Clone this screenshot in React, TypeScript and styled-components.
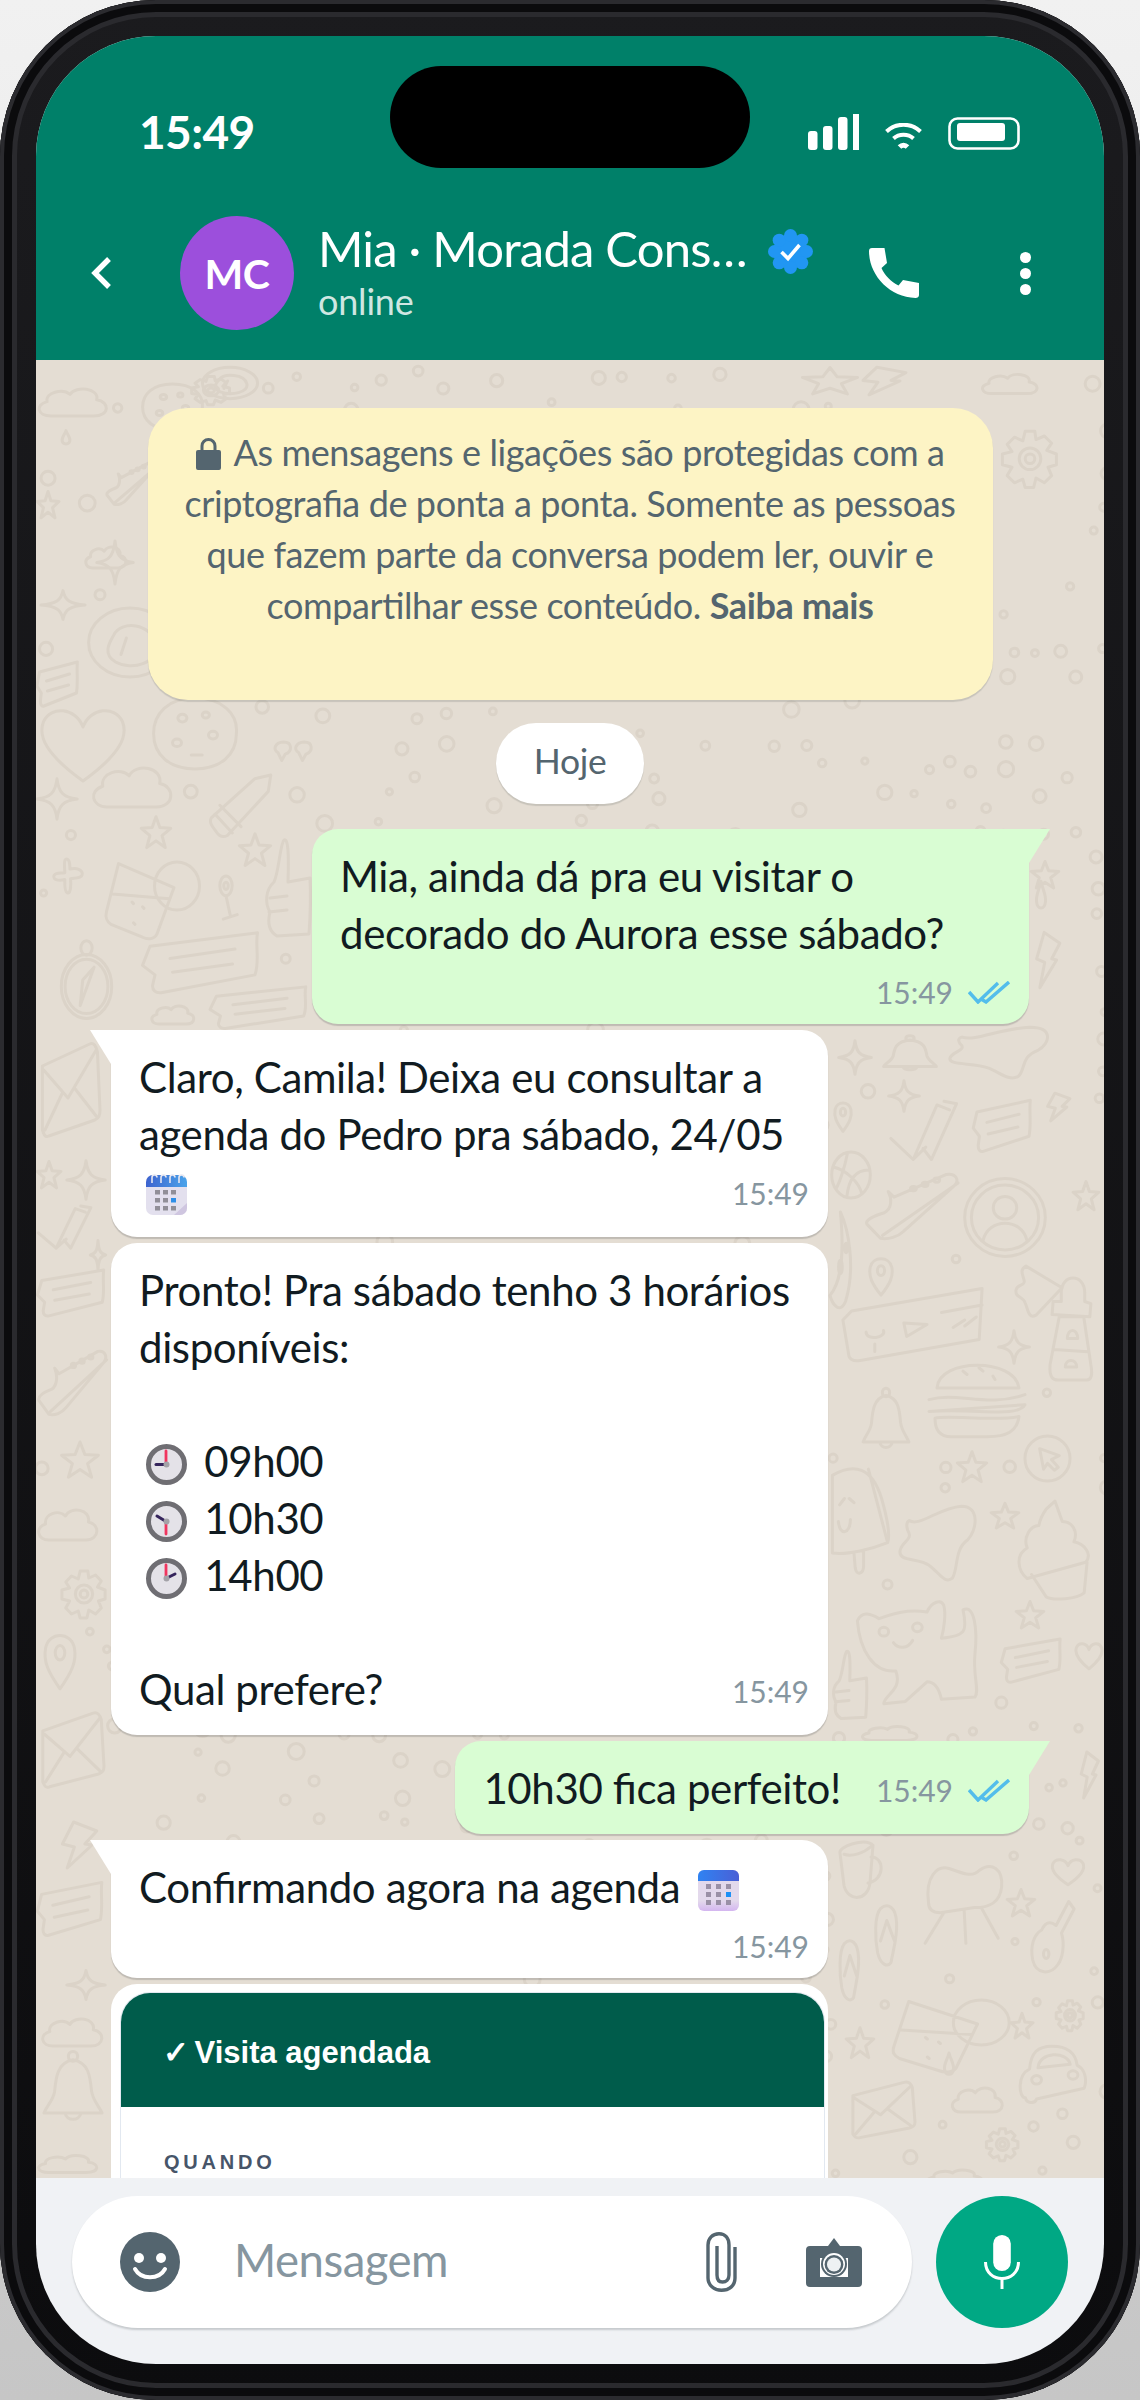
import React from 'react';
import styled, { createGlobalStyle } from 'styled-components';

const c = (x: number, y: number, r: number) =>
  `M${x - r} ${y}a${r} ${r} 0 1 0 ${r * 2} 0a${r} ${r} 0 1 0 ${-r * 2} 0Z`;

// doodles of the wallpaper, each one in a 100x100 box
const SHAPES: Record<string, string> = {
  star: 'M50 5L62 36L96 38L69 59L79 93L50 74L21 93L31 59L4 38L38 36Z',
  spark: 'M50 2C54 35 65 46 98 50C65 54 54 65 50 98C46 65 35 54 2 50C35 46 46 35 50 2Z',
  plus: 'M42 4C50 0 56 6 56 30C78 26 98 32 94 46C90 56 70 54 58 56C60 76 58 98 48 94C38 90 40 70 40 58C22 62 2 60 6 48C10 38 28 42 40 40C40 26 36 10 42 4Z',
  cloud: 'M20 80C2 80-2 55 15 48C12 28 36 18 46 32C54 12 86 18 82 44C100 48 100 80 78 80Z',
  heart: 'M50 90C10 60 2 40 8 24C16 6 42 8 50 30C58 8 84 6 92 24C98 40 90 60 50 90Z',
  chat: 'M8 24L94 4C92 24 96 44 92 66L18 92C12 94 10 88 10 82L12 66L2 52ZM24 42L76 28M26 62L74 50',
  pin: 'M50 98C20 70 8 52 14 30C22 2 78 2 86 30C92 52 80 70 50 98Z' + c(50, 38, 12),
  bell: `M50 14C26 18 24 40 22 60C20 72 10 80 6 90L94 90C88 78 80 72 78 58C76 38 74 18 50 14Z${c(50, 9, 7)}M38 90C40 102 60 102 62 90`,
  checks: 'M4 62L36 96L70 8L88 16M36 96L54 76M50 78L62 96L98 6L80 2',
  ball: `${c(50, 50, 46)}M8 34C40 40 70 66 76 88M42 5C34 40 20 70 14 78M92 40C60 40 44 60 40 94`,
  sneaker: 'M26 26L32 34L86 2C96 0 100 10 94 18L42 82C36 90 26 94 18 92L4 72C2 66 12 60 22 56C30 50 30 36 26 26ZM20 88L98 14M48 26' + c(52, 22, 3) + c(64, 16, 3) + c(76, 10, 3),
  profile: `${c(50, 50, 48)}${c(50, 50, 40)}${c(50, 38, 14)}M24 78C30 50 70 50 76 78`,
  bolt: 'M34 4L92 22L62 48L80 50L18 96L36 54L6 48Z',
  moon: 'M40 2C70 20 100 60 60 96C40 110 10 100 0 90C30 80 60 60 40 2Z' + c(40, 60, 7) + c(62, 40, 5),
  voice: `M8 32L98 2L96 70L14 98C8 100 6 94 6 90L2 44ZM18 60C18 72 32 68 30 58M24 76L24 86M44 48L60 50L46 66ZM70 34L98 24M86 44L78 54M94 40L86 52`,
  plane: 'M26 2L98 40L46 88C30 96 30 76 24 66C20 54 4 58 6 44C8 32 26 38 22 26C18 14 14 8 26 2Z',
  tower: 'M28 20C28 2 74 2 74 20L74 28L86 30L84 42L10 40L12 28L28 28ZM24 42L6 86C4 98 12 100 22 100L78 100C86 100 90 96 86 86L72 42ZM14 72L80 74M40 62C40 52 60 52 60 62ZM36 88C36 80 58 80 58 88Z',
  burger: 'M10 38C12 2 88 2 92 38ZM2 52C30 42 60 62 98 46M2 66L98 58C90 74 50 62 2 66ZM8 74C20 70 70 78 92 72C90 90 80 96 60 96L24 96C12 96 8 86 8 74ZM36 18L40 22M52 14L56 18M66 24L68 28',
  cursor: `${c(50, 50, 46)}M34 30L74 44L58 52L72 68L64 74L50 60L42 72Z`,
  popsicle: 'M4 8C40-4 70 0 86 30C96 50 100 66 96 72C70 78 30 84 4 82ZM64 2L96 72M40 82L42 96C44 104 56 102 56 94L56 80M14 52C16 66 34 64 34 50M24 30L16 36M40 34L32 30',
  blob: 'M12 22C26 30 50 6 80 4C104 4 100 34 88 46C70 58 76 82 68 94C58 102 50 86 38 78C24 68 -2 74 0 60C2 48 18 46 10 34C8 28 8 24 12 22Z',
  cupcake: 'M40 10L52 2L62 22C76 22 84 32 78 42C92 44 104 54 94 62L14 78C0 70 -2 54 14 48C8 38 18 26 30 26C32 18 36 14 40 10ZM20 74L40 96C50 100 82 98 92 92L96 62',
  cat: `M2 20C6 10 14 14 20 18C40 10 50 10 60 12C64 2 72 0 74 6C76 14 74 28 72 36C92 34 94 30 90 10C100 4 102 30 100 50C98 70 104 84 100 90L72 92C70 82 66 76 60 76L42 94L24 96C24 88 40 84 34 66C16 68 4 48 2 20Z${c(24, 30, 4)}${c(52, 26, 4)}M32 40C36 46 44 46 48 38`,
  cup: `M10 20C6 10 60-4 76 8L70 66C66 94 26 96 18 70ZM72 26C100 26 100 62 66 66M18 22C34 26 58 20 72 10`,
  chair: 'M10 50C6 20 20 6 34 10C48 14 60 22 70 12C84 2 98 10 96 32C94 50 82 56 64 56L24 62C14 62 10 58 10 50ZM28 62L6 98M52 60L54 98M72 56L92 92',
  flip: 'M30 6C50-4 74 2 76 30C78 54 68 70 60 96C50 104 30 100 22 80C14 56 12 18 30 6ZM48 26L30 60M48 26L70 60',
  guitar: 'M86 2L98 12L70 44C78 60 72 78 62 86C46 100 14 100 6 80C0 62 8 46 26 40C36 26 50 30 58 34Z' + c(36, 72, 6),
  glass: `M18 2L92 32L70 88C68 96 58 98 50 94L8 78C2 74 0 70 2 62ZM10 40L86 46M36 50L38 52M50 56L52 58M38 76L40 78${c(96, 30, 30)}`,
  envelope: 'M10 26L84 4C90 2 94 6 96 12L100 70C100 76 98 78 92 80L20 96C14 98 12 94 10 90ZM12 30L50 58L94 10M14 90L42 52M94 76L60 48',
  car: `M18 40C20 12 30 2 50 2C72 2 84 14 86 34C98 40 100 60 96 72L28 90C26 98 14 98 12 88C2 88 0 50 18 40ZM30 38C32 10 72 10 76 32Z${c(28, 58, 7)}${c(80, 50, 7)}`,
  gear: `M42 2L58 2L60 16L74 10L86 22L78 34L94 40L94 58L80 62L86 76L74 88L60 80L56 96L42 96L38 82L24 88L12 76L20 62L4 58L4 40L20 36L12 24L24 12L38 18Z${c(50, 48, 18)}${c(50, 48, 8)}`,
  compass: `${c(50, 58, 40)}${c(50, 58, 34)}${c(50, 10, 9)}M62 34L40 82L44 50Z`,
  thumb: 'M24 44C34 34 36 6 44 2C52 0 54 14 52 44L96 40C98 60 96 82 94 96L30 98C16 94 10 86 16 74C6 66 6 52 24 44ZM16 60L50 58M14 74L50 72',
  pencil: 'M2 68L72 6L98 0L94 26L28 96C20 100 14 96 10 90C4 82-2 76 2 68ZM16 48L50 82M8 62L36 92',
  cookie: `M50 4C80 4 98 24 96 50C96 78 78 96 50 96C22 96 4 78 4 50C4 24 20 4 50 4Z${c(36, 30, 5)}${c(62, 26, 4)}${c(70, 52, 5)}${c(30, 62, 5)}M46 78L58 78`,
  planet: `${c(50, 50, 46)}M32 40C40 20 74 24 78 52C82 78 52 88 34 76C20 66 26 52 32 40ZM46 44L40 66`,
  quote: 'M30 6C50 6 50 36 34 44L26 64L18 40C6 30 10 8 30 6ZM76 6C96 6 96 36 80 44L72 64L64 40C52 30 56 8 76 6Z',
  lollipop: `${c(50, 24, 22)}${c(50, 24, 8)}M50 46L66 92M40 98L90 88`,
  drop: 'M50 4C60 30 88 50 82 72C76 100 24 100 18 72C12 50 40 30 50 4Z',
};

type Item = [string, number, number, number, number];

// placed by hand from the reference, in page pixels
const ITEMS: Item[] = [
  ['cloud', 36, 380, 110, 425], ['planet', 200, 366, 260, 400], ['gear', 190, 376, 232, 406], ['cookie', 140, 382, 205, 432],
  ['star', 800, 366, 860, 396], ['bolt', 860, 366, 910, 396], ['cloud', 980, 368, 1040, 400], ['gear', 1000, 430, 1060, 490],
  ['drop', 60, 430, 72, 445], ['sneaker', 105, 462, 156, 508], ['star', 36, 490, 60, 520], ['cloud', 84, 540, 128, 575],
  ['spark', 96, 540, 134, 585], ['planet', 85, 605, 175, 680], ['spark', 40, 590, 86, 620], ['chat', 36, 660, 80, 710],
  ['heart', 36, 700, 130, 790], ['cloud', 90, 755, 175, 820], ['cookie', 150, 695, 240, 772], ['quote', 270, 740, 315, 772],
  ['pencil', 210, 775, 272, 838], ['star', 140, 815, 172, 850], ['star', 238, 832, 272, 868], ['spark', 36, 778, 78, 820],
  ['plus', 52, 858, 84, 895], ['glass', 105, 862, 180, 942], ['lollipop', 212, 875, 240, 920], ['thumb', 262, 838, 312, 938],
  ['compass', 55, 940, 118, 1020], ['chat', 140, 930, 265, 998], ['chat', 208, 985, 312, 1032], ['cloud', 150, 1000, 196, 1030],
  ['envelope', 36, 1040, 100, 1140], ['spark', 66, 1160, 106, 1200], ['star', 36, 1160, 62, 1190], ['checks', 36, 1205, 92, 1250],
  ['spark', 90, 1240, 106, 1270], ['chat', 36, 1268, 108, 1320], ['sneaker', 36, 1350, 108, 1420], ['star', 60, 1440, 100, 1480],
  ['cloud', 36, 1500, 100, 1550], ['gear', 60, 1570, 108, 1620], ['pin', 40, 1630, 80, 1690], ['envelope', 36, 1710, 104, 1790],
  ['bolt', 60, 1820, 100, 1870], ['chat', 36, 1880, 106, 1940], ['spark', 66, 1970, 106, 2000], ['cloud', 40, 2010, 105, 2055],
  ['bell', 40, 2050, 106, 2120], ['cloud', 36, 2150, 100, 2178],
  ['star', 1030, 860, 1060, 890], ['bolt', 1035, 930, 1062, 990], ['drop', 1034, 880, 1048, 910], ['bell', 880, 1035, 940, 1070], ['blob', 950, 1025, 1050, 1080],
  ['spark', 838, 1040, 872, 1075], ['spark', 888, 1080, 920, 1112], ['pin', 832, 1100, 854, 1132], ['checks', 888, 1100, 958, 1162],
  ['chat', 972, 1098, 1034, 1156], ['bolt', 1046, 1092, 1072, 1122], ['ball', 830, 1150, 872, 1200], ['sneaker', 863, 1173, 960, 1244],
  ['profile', 963, 1177, 1047, 1258], ['star', 1072, 1180, 1100, 1212], ['moon', 830, 1210, 856, 1305], ['pin', 866, 1255, 896, 1296],
  ['voice', 840, 1287, 985, 1362], ['plane', 1013, 1265, 1063, 1322], ['tower', 1047, 1271, 1098, 1380], ['spark', 998, 1330, 1030, 1364],
  ['burger', 927, 1356, 1027, 1440], ['bell', 860, 1387, 912, 1448], ['cursor', 1023, 1434, 1072, 1483], ['star', 956, 1450, 988, 1484],
  ['popsicle', 830, 1467, 890, 1572], ['blob', 900, 1503, 977, 1583], ['star', 990, 1502, 1020, 1530], ['cupcake', 1017, 1499, 1090, 1601],
  ['cat', 855, 1599, 975, 1708], ['star', 1015, 1600, 1045, 1630], ['chat', 1000, 1637, 1064, 1686], ['heart', 1074, 1640, 1104, 1672],
  ['thumb', 830, 1650, 868, 1720], ['cloud', 860, 1722, 920, 1745], ['bell', 860, 1745, 910, 1790], ['chair', 880, 1750, 960, 1800],
  ['bolt', 1080, 1750, 1100, 1800], ['cup', 835, 1840, 885, 1905], ['chair', 920, 1860, 1005, 1945], ['heart', 1050, 1856, 1086, 1888],
  ['star', 1006, 1888, 1036, 1918], ['flip', 870, 1905, 905, 1965], ['guitar', 1030, 1900, 1075, 1975], ['flip', 835, 1940, 866, 2000],
  ['glass', 892, 2000, 985, 2075], ['star', 845, 2026, 875, 2060], ['star', 1010, 2012, 1034, 2040], ['gear', 1055, 2000, 1085, 2032],
  ['drop', 942, 2052, 956, 2076], ['envelope', 846, 2080, 915, 2140], ['cloud', 950, 2080, 1005, 2120], ['car', 1017, 2045, 1087, 2105],
  ['gear', 985, 2128, 1020, 2162], ['cloud', 925, 2165, 985, 2190],
];

const makeDots = () => {
  const dots: [number, number, number][] = [];
  let seed = 7;
  const rnd = () => {
    seed = (seed * 16807) % 2147483647;
    return seed / 2147483647;
  };
  for (let y = 370; y < 2178; y += 30) {
    for (let x = 40; x < 1104; x += 30) {
      const px = x + rnd() * 20;
      const py = y + rnd() * 20;
      const r = 3 + rnd() * 5;
      if (rnd() > 0.42) continue;
      const hit = ITEMS.some(([, a, b, e, f]) => px > a - r - 3 && px < e + r + 3 && py > b - r - 3 && py < f + r + 3);
      const near = dots.some(([u, v, w]) => Math.hypot(u - px, v - py) < w + r + 8);
      if (!hit && !near) dots.push([px, py, r]);
    }
  }
  return dots;
};

const DOTS = makeDots();

const GlobalStyle = createGlobalStyle`
  html, body { margin: 0; padding: 0; }
  body {
    width: 1140px; height: 2400px; overflow: hidden;
    background: linear-gradient(180deg, #f1f1f1 0%, #dcdcdc 50%, #c6c6c6 100%);
    font-family: Lato, "Noto Sans", sans-serif;
  }
  * { box-sizing: border-box; }
`;

const Phone = styled.div`
  width: 1140px; height: 2400px; padding: 36px;
  border-radius: 156px;
  background: linear-gradient(180deg, #1b1b1e 0%, #0c0c0e 100%);
  box-shadow: inset 0 0 0 4px #2b2b2f, inset 0 0 0 12px #0b0b0d, inset 0 0 0 17px #2a2a2e;
`;

const Screen = styled.div`
  position: relative;
  height: 100%; border-radius: 120px; overflow: hidden;
  display: flex; flex-direction: column;
  background: #f0f2f5;
`;

const Island = styled.div`
  position: absolute; top: 30px; left: 354px;
  width: 360px; height: 102px; border-radius: 51px; background: #000;
`;

const Header = styled.header`
  background: #008069; color: #fff; height: 324px; flex: none;
`;

const StatusBar = styled.div`
  height: 180px; padding: 71px 84px 0 103px;
  display: flex; justify-content: space-between; align-items: flex-start;
`;

const Clock = styled.div`
  font-size: 46px; font-weight: 700; line-height: 50px; letter-spacing: -0.6px;
`;

const StatusIcons = styled.div`
  display: flex; align-items: flex-end; height: 43px; gap: 26px;
  svg { display: block; }
`;

const NavRow = styled.div`
  display: flex; align-items: center; padding-left: 55px;
  svg { display: block; flex: none; }
`;

const Avatar = styled.div`
  width: 114px; height: 114px; border-radius: 50%; flex: none;
  margin: 0 24px 0 69px;
  background: #9c4fdc;
  display: flex; align-items: center; justify-content: center;
  font-size: 41px; font-weight: 700; letter-spacing: -0.5px;
`;

const TitleBlock = styled.div`
  width: 551px; flex: none;
`;

const TitleLine = styled.div`
  display: flex; align-items: center; gap: 20px; height: 60px;
`;

const Name = styled.div`
  width: 430px; height: 60px; padding-bottom: 6px;
  font-size: 49px; line-height: 54px; letter-spacing: -0.8px;
  white-space: nowrap; overflow: hidden; text-overflow: ellipsis;
`;

const Online = styled.div`
  font-size: 36px; line-height: 41px; letter-spacing: -0.2px; margin-bottom: 3px;
  color: rgba(255, 255, 255, 0.82);
`;

const Dots = styled.div`
  margin-left: 101px; display: flex; flex-direction: column; gap: 5px;
  span { width: 11px; height: 11px; border-radius: 50%; background: #fff; }
`;

const Chat = styled.main`
  position: relative; flex: 1; min-height: 0; overflow: hidden;
  background: #e4ddd3;
  padding: 48px 75px 0;
  display: flex; flex-direction: column; gap: 6px;
`;

const Wallpaper = styled.svg`
  position: absolute; left: 0; top: 0;
  path { fill: none; stroke: #dbd3c8; stroke-width: 3; stroke-linejoin: round; stroke-linecap: round; vector-effect: non-scaling-stroke; }
`;

const Notice = styled.div`
  position: relative;
  align-self: center; width: 845px; flex: none;
  padding: 18.5px 20px 18.5px;
  border-radius: 40px; background: #fdf4c5;
  box-shadow: 0 2px 1px rgba(11, 20, 26, 0.13);
  color: #54656f; font-size: 36px; line-height: 51px; letter-spacing: -0.4px; text-align: center;
  font-feature-settings: "liga" 1;
  b { font-weight: 700; }
  svg { display: inline-block; vertical-align: -4px; margin-right: 13px; }
`;

const DayPill = styled.div`
  position: relative;
  align-self: center; flex: none;
  margin: 17px 0 19px;
  height: 81px; padding: 0 38px;
  border-radius: 40px; background: #fff;
  box-shadow: 0 2px 1px rgba(11, 20, 26, 0.13);
  color: #54656f; font-size: 35.5px; line-height: 75px; letter-spacing: -0.3px;
`;

const Bubble = styled.div<{ $out?: boolean; $tail?: boolean }>`
  position: relative; flex: none;
  max-width: 717px; width: fit-content;
  align-self: ${({ $out }) => ($out ? 'flex-end' : 'flex-start')};
  display: flow-root;
  padding: 19px 28px 17px 28px;
  border-radius: 26px;
  border-top-left-radius: ${({ $out, $tail }) => (!$out && $tail ? '0' : '26px')};
  border-top-right-radius: ${({ $out, $tail }) => ($out && $tail ? '0' : '26px')};
  background: ${({ $out }) => ($out ? '#d9fdd3' : '#fff')};
  box-shadow: 0 2px 1px rgba(11, 20, 26, 0.17);
  color: #111b21; font-size: 42px; line-height: 57px; letter-spacing: -0.38px;
  font-feature-settings: "liga" 1;

  &::before {
    content: ${({ $tail }) => ($tail ? "''" : 'none')};
    position: absolute; top: 0; width: 21px; height: 34px;
    ${({ $out }) => ($out ? 'right: -21px;' : 'left: -21px;')}
    background: ${({ $out }) => ($out ? '#d9fdd3' : '#fff')};
    clip-path: ${({ $out }) =>
      $out ? 'polygon(0 0, 100% 0, 0 100%)' : 'polygon(0 0, 100% 0, 100% 100%)'};
  }
`;

const Meta = styled.span`
  float: right; display: flex; align-items: center; gap: 15px;
  height: 45px; padding-top: 15px;
  margin: 0 -9px 0 35px;
  color: #8696a0; font-size: 30px; line-height: 36px; letter-spacing: 0;
`;

const CardBubble = styled.div`
  position: relative; flex: none; width: 717px;
  padding: 8px 3px 0 9px;
  border-radius: 26px 26px 0 0; background: #fff;
`;

const Card = styled.div`
  border: 1px solid #e2e8f0; border-bottom: 0;
  border-radius: 30px 30px 0 0; overflow: hidden;
  font-family: "Liberation Sans", Arial, sans-serif;
`;

const CardHead = styled.div`
  height: 114px; padding-left: 42px;
  background: #005c4b; color: #fff;
  font-size: 31px; font-weight: 700; line-height: 120px;
`;

const CheckMark = styled.span`
  margin-right: -3px;
`;

const CardBody = styled.div`
  padding: 43px 43px 60px;
`;

const FieldLabel = styled.div`
  color: #475569; font-size: 20px; font-weight: 700; letter-spacing: 3.8px; line-height: 24px;
`;

const Composer = styled.footer`
  flex: none; height: 186px; padding: 18px 36px 36px;
  display: flex; gap: 24px;
`;

const InputBox = styled.div`
  flex: 1; display: flex; align-items: center;
  padding: 0 50px 0 48px;
  border-radius: 66px; background: #fff;
  box-shadow: 0 2px 2px rgba(11, 20, 26, 0.18);
  svg { display: block; flex: none; }
`;

const Placeholder = styled.span`
  flex: 1; margin-left: 54px; padding-bottom: 5px;
  color: #8696a0; font-size: 45.5px; letter-spacing: -0.5px;
`;

const MicButton = styled.div`
  width: 132px; height: 132px; border-radius: 50%; flex: none;
  background: #00a884;
  display: flex; align-items: center; justify-content: center;
`;

const EmojiBox = styled.svg`
  display: inline-block; vertical-align: -7.5px; margin: 0 7px;
`;

const Ticks = () => (
  <svg width="42" height="23" viewBox="0 0 42 23" fill="none" stroke="#53bdeb" strokeWidth="3.4" style={{ display: 'block' }}>
    <path d="M1 11l9 10L30 2" />
    <path d="M13 18l5 3L41 1" />
  </svg>
);

const CalendarSpiral = () => (
  <EmojiBox width="41" height="42" viewBox="0 0 41 42">
    <defs>
      <linearGradient id="calTop" x1="0" y1="0" x2="1" y2="0">
        <stop offset="0" stopColor="#3d63cf" />
        <stop offset="1" stopColor="#4aa3ea" />
      </linearGradient>
    </defs>
    <rect y="2" width="41" height="40" rx="7" fill="#e3e0ee" />
    <path d="M0 14V9a7 7 0 0 1 7-7h27a7 7 0 0 1 7 7v5z" fill="url(#calTop)" />
    {[6, 15, 24, 33].map((x) => (
      <path key={x} d="M0 9V3.5a2.5 2.5 0 0 1 5 0" transform={`translate(${x} 1)`} fill="none" stroke="#e6e6f0" strokeWidth="1.6" />
    ))}
    {[9, 17, 25].map((y) =>
      [9, 17, 25].map((x) => (
        <rect key={`${x}-${y}`} x={x} y={y + 8} width="5" height="4.5" fill={x === 25 && y === 17 ? '#2e8fe8' : '#918f98'} />
      )),
    )}
    <path d="M41 30v5a7 7 0 0 1-7 7h-6z" fill="#cfc6e0" />
  </EmojiBox>
);

const CalendarPlain = () => (
  <EmojiBox width="41" height="41" viewBox="0 0 41 41">
    <defs>
      <linearGradient id="calTop2" x1="0" y1="0" x2="1" y2="0">
        <stop offset="0" stopColor="#2f83f2" />
        <stop offset="1" stopColor="#4a5fd6" />
      </linearGradient>
      <linearGradient id="calBody" x1="0" y1="0" x2="0" y2="1">
        <stop offset="0.75" stopColor="#e3d9ec" />
        <stop offset="1" stopColor="#d4b6f0" />
      </linearGradient>
    </defs>
    <rect width="41" height="41" rx="6" fill="url(#calBody)" />
    <path d="M0 11V6a6 6 0 0 1 6-6h29a6 6 0 0 1 6 6v5z" fill="url(#calTop2)" />
    {[15, 23, 31].map((y) =>
      [8, 18, 28].map((x) => (
        <rect key={`${x}-${y}`} x={x} y={y - 1} width="5" height="5" fill={x === 28 && y === 23 ? '#1e90f5' : '#9a90a6'} />
      )),
    )}
  </EmojiBox>
);

const ClockEmoji = ({ hx, hy, down }: { hx: number; hy: number; down?: boolean }) => (
  <EmojiBox width="41" height="41" viewBox="0 0 41 41">
    <circle cx="20.5" cy="20.5" r="18" fill="#e4e2e8" stroke="#6f6e73" strokeWidth="5" />
    <path d={`M20 20.5V${down ? 33 : 7}`} stroke="#f0355f" strokeWidth="2.8" strokeLinecap="round" />
    <path d={`M20 20.5L${hx} ${hy}`} stroke="#35245c" strokeWidth="3" strokeLinecap="round" />
    <circle cx="20.5" cy="20.5" r="3" fill="#a3a2a8" />
  </EmojiBox>
);

const Verified = () => {
  const lobes = [0, 45, 90, 135, 180, 225, 270, 315].map((a) => {
    const t = (a * Math.PI) / 180;
    return <circle key={a} cx={22.5 + 16 * Math.cos(t)} cy={22.5 + 16 * Math.sin(t)} r="6.5" />;
  });
  return (
    <svg width="45" height="45" viewBox="0 0 45 45">
      <g fill="#2196f3">
        <circle cx="22.5" cy="22.5" r="17" />
        {lobes}
      </g>
      <path d="M13.5 23l6.5 6.5L31.5 16" fill="none" stroke="#fff" strokeWidth="3.6" />
    </svg>
  );
};

export default function App() {
  return (
    <>
      <GlobalStyle />
      <Phone>
        <Screen>
          <Header>
            <StatusBar>
              <Clock>15:49</Clock>
              <StatusIcons>
                <svg width="51" height="36" viewBox="0 0 51 36" fill="#fff">
                  <rect y="17" width="9.5" height="19" rx="3" />
                  <rect x="15" y="12" width="9.5" height="24" rx="3" />
                  <rect x="30" y="3" width="9.5" height="33" rx="3" />
                  <rect x="45" width="6" height="36" />
                </svg>
                <svg width="37" height="27" viewBox="0 0 37 27" fill="none" stroke="#fff" strokeWidth="4">
                  <path d="M1.5 8.5C11 -0.5 26 -0.5 35.5 8.5" />
                  <path d="M8.5 15.5C14 10.5 23 10.5 28.5 15.5" />
                  <path d="M14.5 24C17 21.5 20 21.5 22.5 24" strokeWidth="5" />
                </svg>
                <svg width="72" height="33" viewBox="0 0 72 33">
                  <rect x="1.5" y="1.5" width="69" height="30" rx="8" fill="none" stroke="#fff" strokeWidth="2.6" />
                  <rect x="9" y="6" width="48" height="18" rx="3" fill="#fff" />
                </svg>
              </StatusIcons>
            </StatusBar>
            <NavRow>
              <svg width="20" height="32" viewBox="0 0 20 32" fill="none" stroke="#fff" strokeWidth="5.4">
                <path d="M18 2L4 16l14 14" />
              </svg>
              <Avatar>MC</Avatar>
              <TitleBlock>
                <TitleLine>
                  <Name>Mia · Morada Construtora</Name>
                  <Verified />
                </TitleLine>
                <Online>online</Online>
              </TitleBlock>
              <svg width="50" height="50" viewBox="0 0 50 50" fill="#fff">
                <path d="M3 0H15.5L18 15L12.5 20C15.5 27.5 22 33.5 29.5 37.5L34 32L50 35V47C50 49 48.5 50 46.5 50C20 49 0 27 0 3C0 1 1 0 3 0Z" />
              </svg>
              <Dots>
                <span />
                <span />
                <span />
              </Dots>
            </NavRow>
          </Header>

          <Chat>
            <Wallpaper width="1068" height="1818" viewBox="36 360 1068 1818">
              {ITEMS.map(([name, x0, y0, x1, y1], i) => (
                <path
                  key={i}
                  d={SHAPES[name]}
                  transform={`translate(${x0} ${y0}) scale(${(x1 - x0) / 100} ${(y1 - y0) / 100})`}
                />
              ))}
              {DOTS.map(([x, y, r], i) => (
                <path key={i} d={c(x, y, r)} />
              ))}
            </Wallpaper>

            <Notice>
              <svg width="25" height="33" viewBox="0 0 25 33" fill="#54656f">
                <path d="M2 13h2.5V9a8 8 0 0 1 16 0v4H23a2 2 0 0 1 2 2v16a2 2 0 0 1-2 2H2a2 2 0 0 1-2-2V15a2 2 0 0 1 2-2zM7.5 13h10V9a5 5 0 0 0-10 0z" />
              </svg>
              As mensagens e ligações são protegidas com a criptografia de ponta a ponta. Somente as
              pessoas que fazem parte da conversa podem ler, ouvir e compartilhar esse conteúdo.{' '}
              <b>Saiba mais</b>
              <br />
              &nbsp;
            </Notice>

            <DayPill>Hoje</DayPill>

            <Bubble $out $tail>
              Mia, ainda dá pra eu visitar o decorado do Aurora esse sábado?
              <Meta>
                15:49
                <Ticks />
              </Meta>
            </Bubble>

            <Bubble $tail>
              Claro, Camila! Deixa eu consultar a agenda do Pedro pra sábado, 24/05 <CalendarSpiral />
              <Meta>15:49</Meta>
            </Bubble>

            <Bubble>
              Pronto! Pra sábado tenho 3 horários disponíveis:
              <br />
              <br />
              <ClockEmoji hx={10} hy={20.5} /> 09h00
              <br />
              <ClockEmoji hx={11} hy={15} down /> 10h30
              <br />
              <ClockEmoji hx={29} hy={16} /> 14h00
              <br />
              <br />
              Qual prefere?
              <Meta>15:49</Meta>
            </Bubble>

            <Bubble $out $tail>
              10h30 fica perfeito!
              <Meta>
                15:49
                <Ticks />
              </Meta>
            </Bubble>

            <Bubble $tail>
              Confirmando agora na agenda <CalendarPlain />
              <Meta>15:49</Meta>
            </Bubble>

            <CardBubble>
              <Card>
                <CardHead>
                  <CheckMark>✓</CheckMark> Visita agendada
                </CardHead>
                <CardBody>
                  <FieldLabel>QUANDO</FieldLabel>
                </CardBody>
              </Card>
            </CardBubble>
          </Chat>

          <Composer>
            <InputBox>
              <svg width="60" height="60" viewBox="0 0 60 60">
                <circle cx="30" cy="30" r="30" fill="#54656f" />
                <circle cx="19" cy="26" r="5" fill="#fff" />
                <circle cx="41" cy="26" r="5" fill="#fff" />
                <path d="M15 37c6 11 24 11 30 0" fill="none" stroke="#fff" strokeWidth="4" strokeLinecap="round" />
              </svg>
              <Placeholder>Mensagem</Placeholder>
              <svg width="31" height="60" viewBox="0 0 31 60" fill="none" stroke="#54656f" strokeWidth="3.4">
                <path d="M29 15V46C29 54 23 58.3 15.5 58.3C8 58.3 2 53 2 46V13C2 6.5 6.5 1.7 13 1.7C19.5 1.7 23 6.5 23 13V43C23 47.5 20 50 16.5 50C13 50 11 47.5 11 43V14" />
              </svg>
              <svg width="56" height="49" viewBox="0 0 56 49" style={{ marginLeft: 69 }}>
                <path d="M4 8H22L28 0L34 8H52a4 4 0 0 1 4 4V45a4 4 0 0 1-4 4H4a4 4 0 0 1-4-4V12a4 4 0 0 1 4-4z" fill="#54656f" />
                <rect x="14" y="20" width="28" height="19" fill="#fff" />
                <circle cx="28" cy="26" r="13" fill="#54656f" />
                <circle cx="28" cy="26" r="11" fill="#fff" />
                <circle cx="28" cy="26.5" r="9.4" fill="#54656f" />
                <circle cx="28" cy="26.5" r="7" fill="#eef1f3" />
              </svg>
            </InputBox>
            <MicButton>
              <svg width="36" height="54" viewBox="0 0 36 54" fill="none" stroke="#fff">
                <rect x="9.2" y="0" width="17.6" height="36" rx="8.8" fill="#fff" stroke="none" />
                <path d="M1.5 27C1.5 49 34.5 49 34.5 27" strokeWidth="3" />
                <path d="M18 42V54" strokeWidth="3" />
              </svg>
            </MicButton>
          </Composer>
          <Island />
        </Screen>
      </Phone>
    </>
  );
}
